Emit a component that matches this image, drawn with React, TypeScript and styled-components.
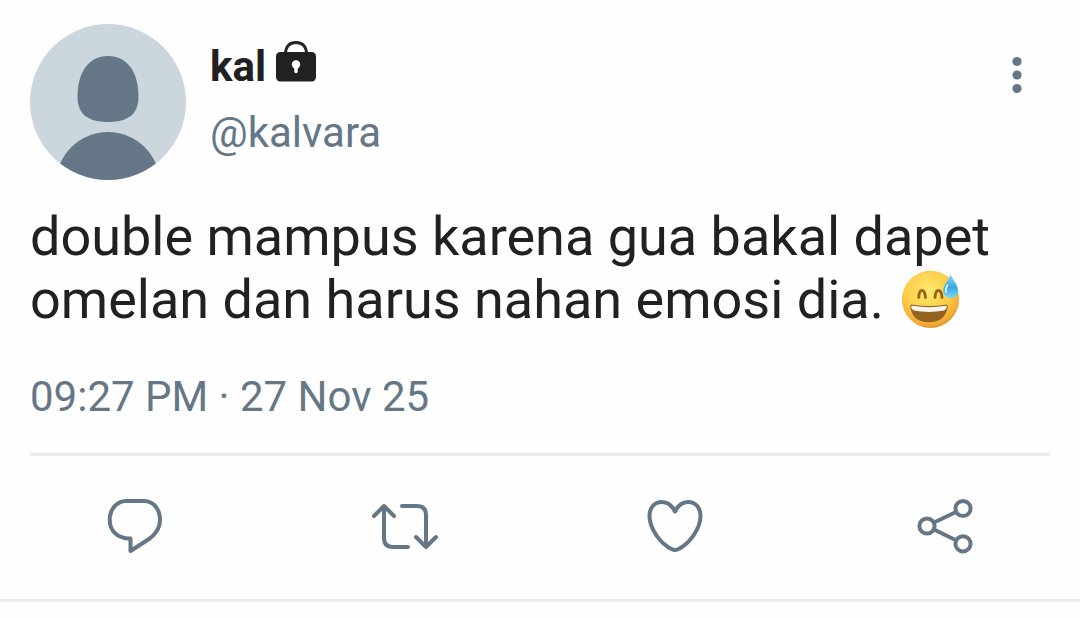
import React from "react";
import styled, { createGlobalStyle } from "styled-components";

const slate = "#657786";
const ink = "#212121";
const rule = "#ebebeb";

const GlobalStyle = createGlobalStyle`
  * { box-sizing: border-box; }
  body {
    margin: 0;
    background: #fefefe;
    color: ${ink};
    font-family: Roboto, "Liberation Sans", sans-serif;
  }
`;

const Tweet = styled.article`
  border-bottom: 3px solid ${rule};
`;

const Header = styled.header`
  display: flex;
  align-items: flex-start;
  padding: 24px 30px 0;
`;

const Avatar = styled.svg`
  flex: none;
  width: 156px;
  height: 156px;
`;

const Identity = styled.div`
  flex: 1;
  min-width: 0;
  padding: 10px 0 0 24px;
`;

const Name = styled.h1`
  display: flex;
  align-items: center;
  gap: 8px;
  margin: 0;
  font-size: 42px;
  line-height: 66px;
  font-weight: 700;
`;

const Lock = styled.svg`
  width: 44px;
  height: 44px;
  margin-bottom: 10px;
`;

const Handle = styled.a`
  display: block;
  color: ${slate};
  font-size: 42px;
  line-height: 66px;
  text-decoration: none;
`;

const IconButton = styled.button`
  display: flex;
  justify-content: center;
  padding: 0;
  border: 0;
  background: none;
  color: ${slate};
  cursor: pointer;
`;

const MoreButton = styled(IconButton)`
  width: 66px;
  padding-top: 27px;
`;

const Body = styled.p`
  margin: 0;
  padding: 25px 30px 0;
  font-size: 54px;
  line-height: 63px;
`;

const Emoji = styled.svg`
  width: 66px;
  height: 60px;
  vertical-align: -11px;
`;

const Time = styled.time`
  display: block;
  margin: 0 30px;
  padding: 35px 0 25px;
  border-bottom: 3px solid ${rule};
  color: ${slate};
  font-size: 42px;
  line-height: 62px;
`;

const Actions = styled.div`
  display: grid;
  grid-template-columns: repeat(4, 1fr);
  padding: 29px 0 34px;
`;

const ActionIcon = styled.svg`
  width: 90px;
  height: 80px;
  fill: none;
  stroke: currentColor;
  stroke-width: 4;
  stroke-linecap: round;
  stroke-linejoin: round;
`;

const actions = [
  {
    label: "Reply",
    art: <path d="M36 16H54C64 16 70 25 70 35C70 43 66 49 59 54L40.500 66V53.500C28 54 19.700 46 19.700 35C19.700 24 27 16 36 16Z" />,
  },
  {
    label: "Retweet",
    art: <path d="M14 31L24 21L34 31M24 21V53Q24 62 33 62H48M42 21H57Q66 21 66 30V62M56 52L66 62L76 52" />,
  },
  {
    label: "Like",
    art: <path d="M45 26.500C42 20.500 37.500 17 32 17C24 17 19.500 23 19.500 31C19.500 44 31 59 42 64.300Q45 65.700 48 64.300C59 59 70.500 44 70.500 31C70.500 23 66 17 58 17C52.500 17 48 20.500 45 26.500Z" />,
  },
  {
    label: "Share",
    art: (
      <>
        <circle cx="63" cy="23.500" r="7.600" />
        <circle cx="27" cy="41" r="7.600" />
        <circle cx="63" cy="58.800" r="7.600" />
        <path d="M34 37.500L56 27M34 44.500L56 55.300" />
      </>
    ),
  },
];

export default function App() {
  return (
    <>
      <GlobalStyle />
      <Tweet>
        <Header>
          <Avatar viewBox="0 0 156 156" role="img" aria-label="Profile picture">
            <clipPath id="avatar-circle">
              <circle cx="78" cy="78" r="78" />
            </clipPath>
            <g clipPath="url(#avatar-circle)">
              <path fill="#ccd6dd" d="M0 0H156V156H0Z" />
              <path fill={slate} d="M78 32C98 32 108.500 49 108.500 73C108.500 90 98 98 78 98C58 98 47.500 90 47.500 73C47.500 49 58 32 78 32Z" />
              <circle cx="78" cy="160" r="52" fill={slate} />
            </g>
          </Avatar>
          <Identity>
            <Name>
              kal
              <Lock viewBox="0 0 44 44" role="img" aria-label="Protected account">
                <path d="M11.500 14C11.500 6 16 2.500 22 2.500S32.500 6 32.500 14" fill="none" stroke={ink} strokeWidth="3" />
                <rect x="2" y="12" width="40" height="29.500" rx="4.500" fill={ink} />
                <circle cx="22" cy="24.500" r="4.200" fill="#fff" />
                <path d="M22 25V31.500" stroke="#fff" strokeWidth="3.400" strokeLinecap="round" />
              </Lock>
            </Name>
            <Handle href="#kalvara">@kalvara</Handle>
          </Identity>
          <MoreButton aria-label="More options">
            <svg width="10" height="48" viewBox="0 0 10 48" fill="currentColor">
              <circle cx="5" cy="10.500" r="4.600" />
              <circle cx="5" cy="24" r="4.600" />
              <circle cx="5" cy="37.500" r="4.600" />
            </svg>
          </MoreButton>
        </Header>
        <Body>
          double mampus karena gua bakal dapet omelan dan harus nahan emosi dia.{" "}
          <Emoji viewBox="7 9 66 60" role="img" aria-label="Grinning face with sweat">
            <defs>
              <radialGradient id="face" cx="0.450" cy="0.350" r="0.680">
                <stop offset="0" stopColor="#ffe96c" />
                <stop offset="0.600" stopColor="#fccb48" />
                <stop offset="0.860" stopColor="#f2ab36" />
                <stop offset="1" stopColor="#de8a2c" />
              </radialGradient>
              <linearGradient id="drop" x1="0" y1="0" x2="0" y2="1">
                <stop offset="0" stopColor="#8fd6f2" />
                <stop offset="0.550" stopColor="#38a8e2" />
                <stop offset="1" stopColor="#85d8f6" />
              </linearGradient>
            </defs>
            <circle cx="40.500" cy="39.400" r="28.600" fill="url(#face)" />
            <path d="M28.800 37.500C29 32 30.300 30.500 32 30.500S35 32 35.500 37.500M45 37.500C45.300 32 46.800 30.500 48.500 30.500S51.700 32 52 37.500" fill="none" stroke="#956319" strokeWidth="2.800" strokeLinecap="round" />
            <path d="M21.500 44.500Q39 47.500 56.500 44.500Q58.300 44.500 57.800 47C56 57 50 62.300 39 62.300S22 57 20.200 47Q19.800 44.500 21.500 44.500Z" fill="#94631f" />
            <path d="M22 45.800Q39 48.500 56 45.800Q57.200 45.800 56.800 47.300Q56.200 50 54 50.600Q39 53.500 24 50.600Q21.800 50 21.200 47.300Q20.800 45.800 22 45.800Z" fill="#f8f6f0" />
            <path d="M60.700 14.500C63 20 68.200 25.500 68.200 31A7.500 7.300 0 0 1 53.200 31C53.200 25.500 58.400 20 60.700 14.500Z" fill="url(#drop)" />
            <path d="M57.500 25Q55 29 56 32" fill="none" stroke="#d5f2fd" strokeWidth="1.800" strokeLinecap="round" />
          </Emoji>
        </Body>
        <Time dateTime="2025-11-27T21:27">09:27 PM · 27 Nov 25</Time>
        <Actions>
          {actions.map(({ label, art }) => (
            <IconButton key={label} aria-label={label}>
              <ActionIcon viewBox="0 0 90 80">{art}</ActionIcon>
            </IconButton>
          ))}
        </Actions>
      </Tweet>
    </>
  );
}
